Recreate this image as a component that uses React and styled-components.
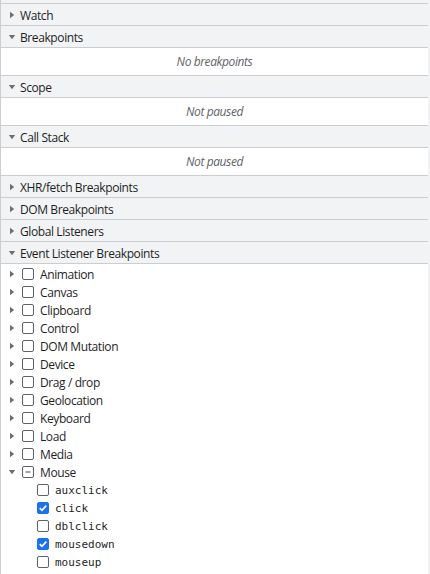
import React from "react";
import styled, { createGlobalStyle } from "styled-components";

const Global = createGlobalStyle`
  html, body { margin: 0; padding: 0; background: #fff; overflow: hidden; }
  body { font-family: "Open Sans", "Noto Sans", sans-serif; font-size: 12px; letter-spacing: -0.4px; color: #1f1f1f; }
`;

const Root = styled.div`
  display: flex;
  width: 430px;
  height: 574px;
  overflow: hidden;
`;

const Panel = styled.div`
  width: 427px;
  border-left: 1px solid #cbcdd1;
  display: flex;
  flex-direction: column;
  background: #fff;
`;

const Gutter = styled.div`
  width: 2px;
  background: #f1f3f4;
`;

const TopStub = styled.div`
  height: 3px;
  background: #f1f3f4;
  flex: none;
`;

const Header = styled.div`
  flex: none;
  box-sizing: border-box;
  height: 22px;
  border-top: 1px solid #cbcdd1;
  background: #f1f3f4;
  display: flex;
  align-items: center;
  padding: 1px 0 0 7px;
  gap: 4px;
  color: #1f1f1f;
  white-space: nowrap;
`;

const Placeholder = styled.div`
  flex: none;
  height: 27px;
  border-top: 1px solid #cbcdd1;
  display: flex;
  align-items: center;
  justify-content: center;
  font-style: italic;
  color: #5f6368;
`;

const List = styled.div`
  border-top: 1px solid #cbcdd1;
  padding-top: 1px;
  display: flex;
  flex-direction: column;
`;

const Row = styled.div`
  height: 18px;
  display: flex;
  align-items: center;
  padding-left: ${(p) => (p.$child ? 36 : 7)}px;
  gap: 6px;
  white-space: nowrap;
`;

const Label = styled.span`
  font-family: ${(p) => (p.$mono ? '"DejaVu Sans Mono", "Liberation Mono", monospace' : "inherit")};
  font-size: ${(p) => (p.$mono ? "11px" : "12px")};
  letter-spacing: ${(p) => (p.$mono ? "0" : "-0.4px")};
  color: #1f1f1f;
`;

const TriBox = styled.svg`
  width: 8px;
  height: 8px;
  flex: none;
  fill: #6e6e6e;
`;

const Box = styled.span`
  width: 12px;
  height: 12px;
  box-sizing: border-box;
  flex: none;
  border-radius: 2px;
  border: 1px solid ${(p) => (p.$checked ? "#1a73e8" : "#5f6368")};
  background: ${(p) => (p.$checked ? "#1a73e8" : "#fff")};
  display: flex;
  align-items: center;
  justify-content: center;
`;

function Tri({ open }) {
  return (
    <TriBox viewBox="0 0 8 8">
      {open ? <path d="M0.8 2 L7.2 2 L4 6.2 Z" /> : <path d="M2 0.8 L6.2 4 L2 7.2 Z" />}
    </TriBox>
  );
}

function Check({ state }) {
  return (
    <Box $checked={state === "on"}>
      {state === "on" && (
        <svg width="10" height="10" viewBox="0 0 10 10">
          <path d="M1.8 5.1 L4 7.3 L8.3 2.6" stroke="#fff" strokeWidth="1.7" fill="none" />
        </svg>
      )}
      {state === "mixed" && (
        <svg width="10" height="10" viewBox="0 0 10 10">
          <path d="M2.5 5 H7.5" stroke="#5f6368" strokeWidth="1.2" />
        </svg>
      )}
    </Box>
  );
}

const categories = [
  "Animation", "Canvas", "Clipboard", "Control", "DOM Mutation", "Device",
  "Drag / drop", "Geolocation", "Keyboard", "Load", "Media",
];

const mouse = [
  ["auxclick", false], ["click", true], ["dblclick", false], ["mousedown", true], ["mouseup", false],
];

export default function App() {
  return (
    <>
      <Global />
      <Root>
        <Panel>
          <TopStub />
          <Header><Tri />Watch</Header>
          <Header><Tri open />Breakpoints</Header>
          <Placeholder>No breakpoints</Placeholder>
          <Header><Tri open />Scope</Header>
          <Placeholder>Not paused</Placeholder>
          <Header><Tri open />Call Stack</Header>
          <Placeholder>Not paused</Placeholder>
          <Header><Tri />XHR/fetch Breakpoints</Header>
          <Header><Tri />DOM Breakpoints</Header>
          <Header><Tri />Global Listeners</Header>
          <Header><Tri open />Event Listener Breakpoints</Header>
          <List>
            {categories.map((c) => (
              <Row key={c}><Tri /><Check /><Label>{c}</Label></Row>
            ))}
            <Row><Tri open /><Check state="mixed" /><Label>Mouse</Label></Row>
            {mouse.map(([m, on]) => (
              <Row key={m} $child><Check state={on ? "on" : "off"} /><Label $mono>{m}</Label></Row>
            ))}
          </List>
        </Panel>
        <Gutter />
      </Root>
    </>
  );
}
